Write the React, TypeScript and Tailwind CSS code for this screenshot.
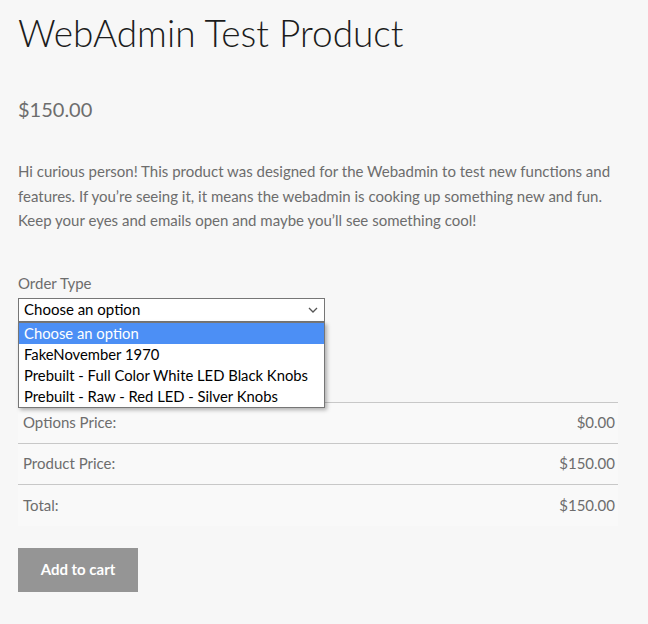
import React from "react";

const options = [
  "Choose an option",
  "FakeNovember 1970",
  "Prebuilt - Full Color White LED Black Knobs",
  "Prebuilt - Raw - Red LED - Silver Knobs",
];

function PriceRow({ label, value, last }: { label: string; value: string; last?: boolean }) {
  return (
    <div className={`flex items-center justify-between h-[41px] pl-[5px] pr-[3px] ${last ? "" : "border-b border-[#c8c8c8]"}`}>
      <span>{label}</span>
      <span>{value}</span>
    </div>
  );
}

export default function App() {
  return (
    <div
      className="min-h-[624px] w-[648px] bg-[#f7f7f7] text-[#6d6d6d] px-[18px]"
      style={{ fontFamily: "Lato, 'Noto Sans', sans-serif" }}
    >
      <h1 className="pt-[8px] text-[37px] font-light leading-[50px] text-[#1c1c1c]">
        WebAdmin Test Product
      </h1>
      <p className="mt-[36px] text-[20px] leading-[30px]">$150.00</p>
      <p className="mt-[35px] text-[15px] leading-[24.5px] w-[612px]">
        Hi curious person! This product was designed for the Webadmin to test new functions and
        features. If you’re seeing it, it means the webadmin is cooking up something new and fun.
        Keep your eyes and emails open and maybe you’ll see something cool!
      </p>
      <div className="mt-[40px] text-[15px] leading-[20px]">Order Type</div>
      <div className="relative mt-[5px] w-[307px]">
        <div className="flex h-[24px] items-center justify-between border border-[#767676] bg-white pl-[5px] pr-[6px] text-[15px] text-black">
          <span>Choose an option</span>
          <svg width="10" height="6" viewBox="0 0 10 6" fill="none">
            <path d="M1 1l4 4 4-4" stroke="#555" strokeWidth="1.3" />
          </svg>
        </div>
        <div className="absolute left-0 top-[24px] z-10 w-[307px] border border-[#767676] bg-white shadow-[2px_2px_4px_rgba(0,0,0,0.3)]">
          {options.map((o, i) => (
            <div
              key={o}
              className={`h-[21px] pl-[5px] text-[14.8px] leading-[21px] ${i === 0 ? "bg-[#4c8ff5] text-white" : "text-black"}`}
            >
              {o}
            </div>
          ))}
        </div>
      </div>
      <div className="mt-[80px] w-[600px] border-t border-[#c8c8c8] bg-[#f9f9f9] text-[15px]">
        <PriceRow label="Options Price:" value="$0.00" />
        <PriceRow label="Product Price:" value="$150.00" />
        <PriceRow label="Total:" value="$150.00" last />
      </div>
      <button className="mt-[22px] h-[44px] w-[120px] bg-[#959595] text-[15px] font-bold text-white">
        Add to cart
      </button>
    </div>
  );
}
